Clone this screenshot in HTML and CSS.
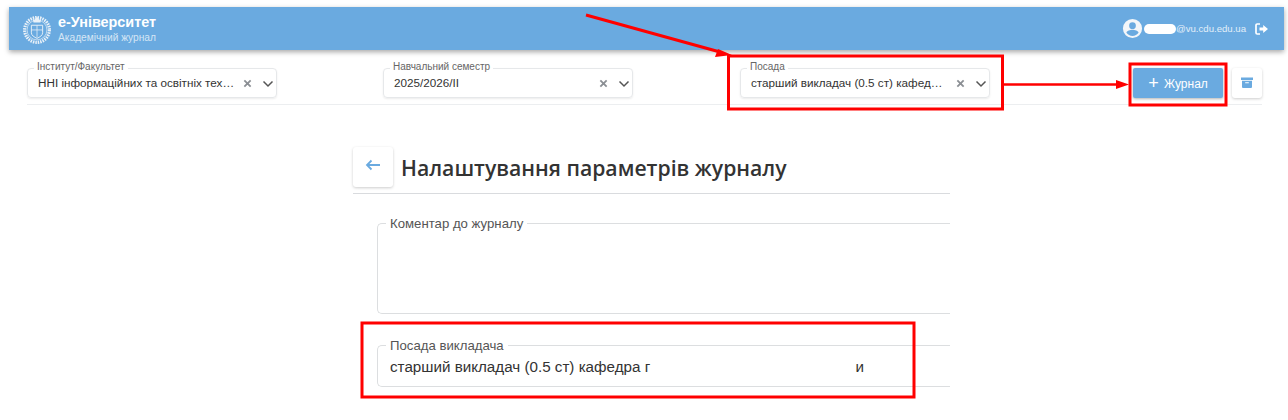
FILE: index.html
```html
<!DOCTYPE html>
<html lang="en">
<head>
    <meta charset="UTF-8">
    <meta name="viewport" content="width=device-width, initial-scale=1.0">
    <title>Налаштування параметрів журналу</title>

    <link rel="stylesheet" href="styles.css">
</head>
<body>
    <header class="topbar">
        <div class="brand">
            <svg class="brand-logo" viewBox="0 0 32 32" fill="none" stroke="#e9f1f8">
                <circle cx="16" cy="17" r="13.2" stroke-width="3.4" stroke-dasharray="1.6 1"/>
                <circle cx="16" cy="17" r="10.6" stroke-width=".7"/>
                <path d="M10 12h12v8c0 3-3 4.500-6 6-3-1.500-6-3-6-6z" stroke-width="1"/>
                <path d="M10 17h12M16 12v13" stroke-width=".8"/>
                <path d="M11.500 5l1.500 1.500L16 3l3 3.500L20.500 5l-.7 4h-7.600z" fill="#e9f1f8" stroke="none"/>
            </svg>
            <div>
                <div class="brand-name">е-Університет</div>
                <div class="brand-sub">Академічний журнал</div>
            </div>
        </div>
        <div class="user">
            <svg class="user-icon" viewBox="0 0 24 24"><path fill="#f3f6f9" d="M12 2a10 10 0 1 0 0 20 10 10 0 0 0 0-20zm0 3.600a3.500 3.500 0 1 1 0 7 3.500 3.500 0 0 1 0-7zm0 14.200c-2.600 0-4.900-1.300-6.300-3.300 0-2.100 4.200-3.200 6.300-3.200s6.300 1.100 6.300 3.200c-1.400 2-3.700 3.300-6.300 3.300z"/></svg>
            <span class="user-blur"></span>
            <span class="user-mail">@vu.cdu.edu.ua</span>
            <svg class="logout" viewBox="0 0 14 12"><path fill="none" stroke="#fff" stroke-width="1.700" d="M5 1H2.200Q1 1 1 2.200v7.600Q1 11 2.200 11H5"/><path fill="#fff" d="M4.500 4.500h3.700V2L13 6l-4.800 4V7.500H4.500z"/></svg>
        </div>
    </header>

    <div class="filters">
        <fieldset class="select select-first">
            <legend>Інститут/Факультет</legend>
            <span class="select-value">ННІ інформаційних та освітніх тех…</span>
            <svg class="clear" viewBox="0 0 10 10"><path d="M1.500 1.500l7 7M8.500 1.500l-7 7"/></svg>
            <svg class="chevron" viewBox="0 0 12 8"><path d="M1.500 1.500L6 6l4.500-4.500"/></svg>
        </fieldset>
        <fieldset class="select select-second">
            <legend>Навчальний семестр</legend>
            <span class="select-value">2025/2026/II</span>
            <svg class="clear" viewBox="0 0 10 10"><path d="M1.500 1.500l7 7M8.500 1.500l-7 7"/></svg>
            <svg class="chevron" viewBox="0 0 12 8"><path d="M1.500 1.500L6 6l4.500-4.500"/></svg>
        </fieldset>
        <fieldset class="select select-third">
            <legend>Посада</legend>
            <span class="select-value">старший викладач (0.5 ст) кафед…</span>
            <svg class="clear" viewBox="0 0 10 10"><path d="M1.500 1.500l7 7M8.500 1.500l-7 7"/></svg>
            <svg class="chevron" viewBox="0 0 12 8"><path d="M1.500 1.500L6 6l4.500-4.500"/></svg>
        </fieldset>
        <button type="button" class="btn-add"><span class="btn-plus">+</span> Журнал</button>
        <button type="button" class="btn-archive">
            <svg viewBox="0 0 12 11"><path fill="#6aaae0" d="M0 .5h12v2.500H0zM1 3.800h10V10a1 1 0 0 1-1 1H2a1 1 0 0 1-1-1zm3.200 1.400v1h3.600v-1z"/></svg>
        </button>
    </div>

    <main class="settings">
        <div class="title-row">
            <button type="button" class="btn-back">
                <svg viewBox="0 0 16 12"><path fill="none" stroke="#6aaae0" stroke-width="1.800" d="M15 6H2M6.500 1.500L2 6l4.500 4.500"/></svg>
            </button>
            <h1>Налаштування параметрів журналу</h1>
        </div>

        <fieldset class="field field-comment">
            <legend>Коментар до журналу</legend>
        </fieldset>
        <fieldset class="field field-post">
            <legend>Посада викладача</legend>
            <span class="field-value">старший викладач (0.5 ст) кафедра г</span>
            <span class="field-tail">и</span>
        </fieldset>
    </main>

    <svg class="notes" viewBox="0 0 1288 420" fill="none" stroke="#f00">
        <rect x="728.500" y="56" width="274" height="53" stroke-width="3"/>
        <rect x="1130" y="64" width="96" height="41" stroke-width="3"/>
        <rect x="362" y="323" width="552" height="74" stroke-width="3"/>
        <path d="M586 15L720 52" stroke-width="3"/>
        <path d="M1003 84.500H1118" stroke-width="2.500"/>
        <path d="M732 55l-14-6-3 8zM1129 84.500l-13-4.500v9z" fill="#f00" stroke="none"/>
    </svg>
</body>
</html>
```

FILE: styles.css
```css
*{
    margin: 0;
    padding: 0;
    box-sizing: border-box;
}
body{
    background-color: #fff;
    color: #333;
    font-family: "Liberation Sans", Arial, sans-serif;
    height: 420px;
    overflow: hidden;
}
.topbar{
    display: flex;
    align-items: center;
    justify-content: space-between;
    margin: 7px 4px 0 9px;
    height: 43px;
    padding: 0 15px 0 13px;
    background-color: #6aaae0;
    box-shadow: 0 2px 5px rgba(0, 0, 0, .35);
    color: #fff;
}
.brand{
    display: flex;
    align-items: center;
    gap: 6px;
}
.brand-logo{
    width: 30px;
    height: 32px;
}
.brand-name{
    font-size: 14.400px;
    font-weight: bold;
    line-height: 17px;
}
.brand-sub{
    font-size: 10.200px;
    line-height: 13px;
    color: #d5e6f5;
}
.user{
    display: flex;
    align-items: center;
}
.user-icon{
    width: 23px;
    height: 23px;
}
.user-blur{
    width: 32px;
    height: 10px;
    border-radius: 5px;
    background-color: #fff;
}
.user-mail{
    font-size: 9.600px;
    color: #e3eff9;
}
.logout{
    width: 14px;
    height: 12px;
    margin-left: 9px;
}
.filters{
    display: flex;
    align-items: flex-end;
    margin: 11px 26px 0 27px;
    padding-bottom: 6px;
    border-bottom: 1px solid #eceef0;
}
.select{
    display: flex;
    align-items: center;
    min-width: 0;
    flex: none;
    height: 37px;
    padding: 0 2px 0 10px;
    border: 1px solid #e6e8ea;
    border-radius: 4px;
    box-shadow: 0 1px 2px rgba(0, 0, 0, .08);
}
.select legend{
    margin-left: -4px;
    padding: 0 3px 3px;
    font-size: 10px;
    line-height: 11px;
    color: #666;
}
.select-first{
    width: 250px;
}
.select-second{
    width: 250px;
    margin-left: 106px;
}
.select-third{
    width: 250px;
    margin-left: 107px;
}
.select-value{
    flex: 1;
    min-width: 0;
    font-size: 11.700px;
    line-height: 18px;
    margin-top: -6px;
    white-space: nowrap;
}
.clear{
    flex: none;
    width: 9px;
    height: 9px;
    margin: -5px 0 0 10px;
    stroke: #8b8f94;
    stroke-width: 2;
}
.chevron{
    flex: none;
    width: 12px;
    height: 8px;
    margin: -5px 0 0 10px;
    fill: none;
    stroke: #555;
    stroke-width: 1.500;
}
.btn-add{
    flex: none;
    width: 90px;
    height: 30px;
    margin-left: 143px;
    border: 0;
    border-radius: 2px;
    background-color: #6aaae0;
    box-shadow: 0 1px 3px rgba(0, 0, 0, .3);
    color: #fff;
    font-family: inherit;
    font-size: 12px;
    white-space: nowrap;
}
.btn-plus{
    font-size: 18px;
    line-height: 14px;
    vertical-align: -1px;
    margin-right: 2px;
}
.btn-archive{
    flex: none;
    width: 30px;
    height: 30px;
    margin-left: 9px;
    border: 0;
    border-radius: 3px;
    background-color: #fff;
    box-shadow: 0 1px 3px rgba(0, 0, 0, .2);
}
.btn-archive svg{
    width: 12px;
    height: 11px;
}
.settings{
    width: 597px;
    margin: 42px 0 0 353px;
}
.title-row{
    display: flex;
    align-items: center;
    gap: 8px;
    height: 47px;
    padding-bottom: 7px;
    border-bottom: 1px solid #d9dbde;
}
.btn-back{
    flex: none;
    width: 40px;
    height: 40px;
    border: 0;
    border-radius: 3px;
    background-color: #fff;
    box-shadow: 0 1px 3px rgba(0, 0, 0, .2);
}
.btn-back svg{
    width: 16px;
    height: 12px;
}
h1{
    margin-top: 2px;
    font-family: "Open Sans", sans-serif;
    font-size: 21.200px;
    font-weight: 600;
    color: #333;
}
.field{
    min-width: 0;
    margin-left: 24px;
    border: 1px solid #dcdee0;
    border-right: 0;
    border-radius: 5px 0 0 5px;
}
.field legend{
    margin-left: 8px;
    padding: 0 4px;
    font-size: 13.200px;
    line-height: 15px;
    color: #555;
}
.field-comment{
    height: 98px;
    margin-top: 22px;
}
.field-post{
    display: flex;
    justify-content: space-between;
    height: 49px;
    margin-top: 24px;
    padding: 4px 86px 0 0;
}
.field-value,
.field-tail{
    font-size: 15.200px;
    line-height: 20px;
}
.field-value{
    margin-left: 12px;
}
.notes{
    position: absolute;
    left: 0;
    top: 0;
    width: 1288px;
    height: 420px;
    pointer-events: none;
}
```
